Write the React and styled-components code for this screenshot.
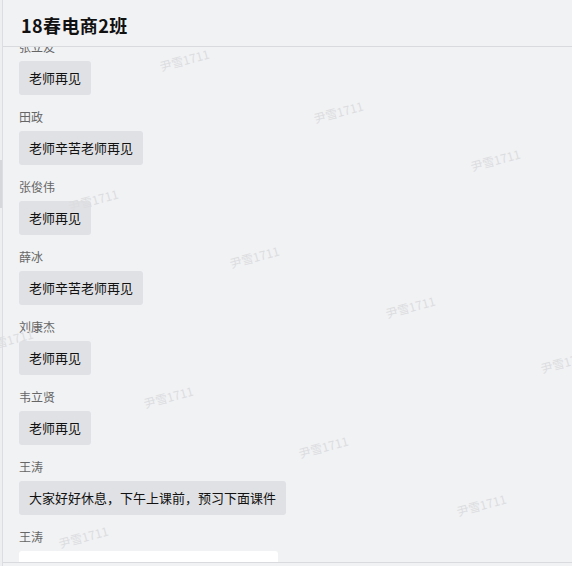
import React from "react";
import styled, { createGlobalStyle } from "styled-components";

const messages = [
  { name: "张立友", text: "老师再见" },
  { name: "田政", text: "老师辛苦老师再见" },
  { name: "张俊伟", text: "老师再见" },
  { name: "薛冰", text: "老师辛苦老师再见" },
  { name: "刘康杰", text: "老师再见" },
  { name: "韦立贤", text: "老师再见" },
  { name: "王涛", text: "大家好好休息，下午上课前，预习下面课件" },
  { name: "王涛", card: true },
];

// watermark centres, as laid over the chat panel
const marks = [
  [186, 60], [340, 112], [497, 160], [95, 200], [256, 257], [412, 307],
  [10, 340], [567, 362], [170, 397], [325, 447], [483, 505], [85, 537],
];

const App = () => {
  return (
    <>
      <GlobalStyle />
      <Page>
        <Rail>
          <RailThumb />
        </Rail>
        <Main>
          <Header>
            <Title>18春电商2班</Title>
          </Header>
          <Feed>
            <List>
              {messages.map((m, i) => (
                <Item key={i}>
                  <Name>{m.name}</Name>
                  {m.card ? <Card /> : <Bubble>{m.text}</Bubble>}
                </Item>
              ))}
            </List>
          </Feed>
          <Footer />
          {marks.map(([x, y], i) => (
            <Watermark key={i} style={{ left: x - 30, top: y - 8 }}>
              尹雪1711
            </Watermark>
          ))}
        </Main>
      </Page>
    </>
  );
};

const GlobalStyle = createGlobalStyle`
  html, body {
    margin: 0;
    padding: 0;
    background: #f1f2f4;
  }
  body {
    font-family: "Noto Sans CJK SC", "Noto Sans", sans-serif;
  }
`;

const Page = styled.div`
  display: flex;
  width: 572px;
  height: 566px;
  overflow: hidden;
  background: #f1f2f4;
`;

const Rail = styled.div`
  width: 2px;
  flex: none;
  background: #eeeff1;
  border-right: 1px solid #dcdde0;
  padding-top: 160px;
`;

const RailThumb = styled.div`
  height: 48px;
  background: #d6d7da;
`;

const Main = styled.div`
  position: relative;
  flex: 1;
  display: flex;
  flex-direction: column;
  min-width: 0;
`;

const Header = styled.div`
  height: 47px;
  flex: none;
  display: flex;
  align-items: center;
  padding: 3px 0 0 18px;
  box-sizing: border-box;
  border-bottom: 1px solid #d9dadd;
  background: #f1f2f4;
  position: relative;
  z-index: 2;
`;

const Title = styled.h1`
  margin: 0;
  font-size: 18px;
  font-weight: 700;
  color: #111;
  letter-spacing: 0.4px;
`;

const Feed = styled.div`
  flex: 1;
  overflow: hidden;
`;

const List = styled.div`
  margin-top: -9px;
  padding-left: 16px;
  display: flex;
  flex-direction: column;
  gap: 13px;
`;

const Item = styled.div`
  display: flex;
  flex-direction: column;
  align-items: flex-start;
  gap: 5px;
`;

const Name = styled.div`
  font-size: 12px;
  line-height: 18px;
  color: #666;
`;

const Bubble = styled.div`
  font-size: 13px;
  line-height: 18px;
  padding: 8px 10px;
  background: #e0e1e4;
  color: #111;
  border-radius: 3px;
`;

const Card = styled.div`
  width: 259px;
  height: 40px;
  background: #fff;
  border-radius: 3px;
`;

const Footer = styled.div`
  height: 3px;
  flex: none;
  border-top: 1px solid #d9dadd;
  background: #f1f2f4;
  position: relative;
  z-index: 2;
`;

const Watermark = styled.div`
  position: absolute;
  font-size: 12px;
  line-height: 16px;
  color: #dcdde0;
  transform: rotate(-15deg);
  white-space: nowrap;
  pointer-events: none;
  z-index: 3;
`;

export default App;
